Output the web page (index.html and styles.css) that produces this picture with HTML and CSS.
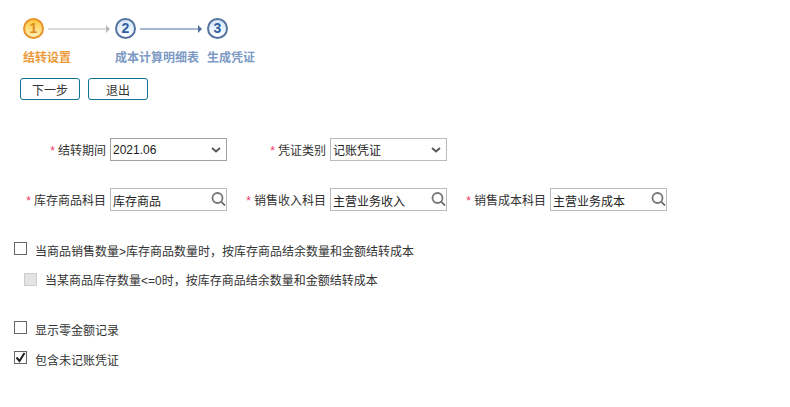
FILE: index.html
```html
<!DOCTYPE html>
<html lang="zh-CN">

<head>
    <meta charset="UTF-8">
    <title>结转设置</title>
    <link rel="stylesheet" href="styles.css">
</head>

<body>
    <div class="steps">
        <div class="step">
            <span class="dot dot-on">1</span>
            <svg class="arrow" width="62" height="10" viewBox="0 0 62 10">
                <path d="M0 5H58" stroke="#b8b8b8" stroke-width="1"/>
                <path d="M58 1l4 4-4 4z" fill="#b8b8b8"/>
            </svg>
        </div>
        <div class="step">
            <span class="dot">2</span>
            <svg class="arrow" width="62" height="10" viewBox="0 0 62 10">
                <path d="M0 5H58" stroke="#4f6f9f" stroke-width="1"/>
                <path d="M58 1l4 4-4 4z" fill="#4f6f9f"/>
            </svg>
        </div>
        <div class="step">
            <span class="dot">3</span>
        </div>
    </div>
    <div class="step-names">
        <span class="name name-on name-1">结转设置</span>
        <span class="name name-2">成本计算明细表</span>
        <span class="name">生成凭证</span>
    </div>
    <div class="btns">
        <button class="btn">下一步</button>
        <button class="btn">退出</button>
    </div>

    <div class="row row-first">
        <div class="field">
            <label class="lbl"><i>*</i>结转期间</label>
            <div class="sel sel-dark">2021.06<svg width="10" height="6" viewBox="0 0 10 6"><path d="M1 1l4 3.5L9 1" fill="none" stroke="#555" stroke-width="1.8"/></svg></div>
        </div>
        <div class="field">
            <label class="lbl"><i>*</i>凭证类别</label>
            <div class="sel">记账凭证<svg width="10" height="6" viewBox="0 0 10 6"><path d="M1 1l4 3.5L9 1" fill="none" stroke="#555" stroke-width="1.8"/></svg></div>
        </div>
    </div>

    <div class="row row-second">
        <div class="field">
            <label class="lbl"><i>*</i>库存商品科目</label>
            <div class="pick">库存商品<svg width="16" height="16" viewBox="0 0 16 16"><circle cx="7.5" cy="7" r="5" fill="none" stroke="#777" stroke-width="1.8"/><path d="M11.5 11l3.5 3.5" stroke="#555" stroke-width="1.6"/></svg></div>
        </div>
        <div class="field">
            <label class="lbl"><i>*</i>销售收入科目</label>
            <div class="pick">主营业务收入<svg width="16" height="16" viewBox="0 0 16 16"><circle cx="7.5" cy="7" r="5" fill="none" stroke="#777" stroke-width="1.8"/><path d="M11.5 11l3.5 3.5" stroke="#555" stroke-width="1.6"/></svg></div>
        </div>
        <div class="field">
            <label class="lbl"><i>*</i>销售成本科目</label>
            <div class="pick">主营业务成本<svg width="16" height="16" viewBox="0 0 16 16"><circle cx="7.5" cy="7" r="5" fill="none" stroke="#777" stroke-width="1.8"/><path d="M11.5 11l3.5 3.5" stroke="#555" stroke-width="1.6"/></svg></div>
        </div>
    </div>

    <div class="check check-a"><span class="box"></span>当商品销售数量&gt;库存商品数量时，按库存商品结余数量和金额结转成本</div>
    <div class="check check-b"><span class="box box-off"></span>当某商品库存数量&lt;=0时，按库存商品结余数量和金额结转成本</div>
    <div class="check check-c"><span class="box"></span>显示零金额记录</div>
    <div class="check check-d"><span class="box"><svg width="11" height="11" viewBox="0 0 11 11"><path d="M1.5 5.5l3 3.5 5-8" fill="none" stroke="#222" stroke-width="2"/></svg></span>包含未记账凭证</div>
</body>

</html>
```

FILE: styles.css
```css
html, body {
    height: 100%;
    overflow: hidden;
}

body {
    margin: 0;
    padding: 18px 0 0 0;
    box-sizing: border-box;
    background-color: #fff;
    color: #333;
    font-family: "Liberation Sans", "Noto Sans CJK SC", sans-serif;
    font-size: 12px;
}

.steps {
    display: flex;
    padding-left: 23px;
    height: 21px;
}

.step {
    display: flex;
    align-items: center;
}

.dot {
    width: 17px;
    height: 17px;
    border: 2px solid #55739f;
    border-radius: 50%;
    background: linear-gradient(#d5e6fa, #ffffff);
    color: #2f5ea3;
    font-size: 14px;
    font-weight: bold;
    line-height: 17px;
    text-align: center;
}

.dot-on {
    border-color: #e8932c;
    background: linear-gradient(#ffc93c, #fff0b8);
    color: #dd8a1e;
}

.arrow {
    margin-left: 4px;
    margin-right: 5px;
}

.step-names {
    display: flex;
    margin-top: 11px;
    padding-left: 23px;
    height: 17px;
    line-height: 17px;
    font-weight: bold;
    color: #7c9ac4;
}

.name-1 {
    width: 92px;
}

.name-2 {
    width: 92px;
}

.name-on {
    color: #ec9a38;
}

.btns {
    display: flex;
    gap: 8px;
    margin-top: 11px;
    padding-left: 20px;
}

.btn {
    width: 60px;
    height: 22px;
    padding: 0;
    border: 1px solid #0f7396;
    border-radius: 3px;
    background-color: #fff;
    color: #333;
    font-family: inherit;
    font-size: 12px;
}

.row {
    display: flex;
}

.row-first {
    margin-top: 38px;
}

.row-second {
    margin-top: 27px;
}

.field {
    display: flex;
    align-items: center;
}

.lbl {
    width: 106px;
    margin-right: 4px;
    text-align: right;
    white-space: nowrap;
}

.field + .field .lbl {
    width: 99px;
}

.lbl i {
    margin-right: 3px;
    color: #f0386b;
    font-style: normal;
}

.sel, .pick {
    display: flex;
    align-items: center;
    justify-content: space-between;
    width: 117px;
    height: 23px;
    padding: 0 2px;
    box-sizing: border-box;
    border: 1px solid #bbb;
    background-color: #fff;
    color: #222;
    font-size: 12px;
}

.sel-dark {
    border-color: #a0a0a0;
}

.pick {
    padding-top: 1px;
}

.pick svg {
    flex: none;
    margin-top: -2px;
    margin-right: -2px;
}

.sel svg {
    margin-right: 3px;
}

.check {
    display: flex;
    align-items: center;
    height: 14px;
    padding-left: 14px;
    white-space: nowrap;
}

.box {
    display: flex;
    align-items: center;
    justify-content: center;
    width: 11px;
    height: 11px;
    margin-right: 8px;
    margin-bottom: 3px;
    border: 1px solid #666;
    background-color: #fff;
}

.box-off {
    margin-bottom: 0;
    border-color: #ccc;
    background-color: #e4e4e4;
}

.check-a {
    margin-top: 32px;
}

.check-b {
    margin-top: 15px;
    padding-left: 24px;
}

.check-c {
    margin-top: 36px;
}

.check-d {
    margin-top: 16px;
}
```
